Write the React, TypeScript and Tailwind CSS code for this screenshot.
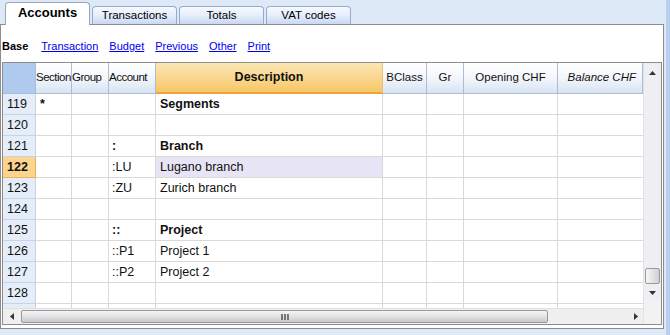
import React from "react";

type Row = {
  n: string;
  section?: string;
  account?: string;
  accBold?: boolean;
  desc?: string;
  descBold?: boolean;
  sel?: boolean;
};

const rows: Row[] = [
  { n: "119", section: "*", desc: "Segments", descBold: true },
  { n: "120" },
  { n: "121", account: ":", accBold: true, desc: "Branch", descBold: true },
  { n: "122", account: ":LU", desc: "Lugano branch", sel: true },
  { n: "123", account: ":ZU", desc: "Zurich branch" },
  { n: "124" },
  { n: "125", account: "::", accBold: true, desc: "Project", descBold: true },
  { n: "126", account: "::P1", desc: "Project 1" },
  { n: "127", account: "::P2", desc: "Project 2" },
  { n: "128" },
  { n: "" },
];

const font = { fontFamily: '"Liberation Sans", Arial, sans-serif' };

function Tab({ label, active }: { label: string; active?: boolean }) {
  if (active) {
    return (
      <div className="relative z-10 -mb-px flex h-[23px] w-[85px] items-center justify-center rounded-t-[4px] border border-b-0 border-[#9aa6b6] bg-white pb-[2px] text-[13px] font-bold text-black">
        {label}
      </div>
    );
  }
  return (
    <div className="flex h-[18px] w-[85px] items-center justify-center rounded-t-[4px] border border-b-0 border-[#93acd0] bg-gradient-to-b from-[#f7f9fe] via-[#e6edfb] to-[#c8d8f4] text-[11.5px] text-black">
      {label}
    </div>
  );
}

function HeaderCell({
  w,
  children,
  align = "center",
  italic,
  tight,
}: {
  w: string;
  children?: React.ReactNode;
  align?: "center" | "left" | "right";
  italic?: boolean;
  tight?: boolean;
}) {
  const al = align === "center" ? "justify-center" : align === "right" ? "justify-end pr-[6px]" : "justify-start";
  return (
    <div
      className={`${w} flex h-full shrink-0 items-center overflow-hidden whitespace-nowrap border-r border-b border-[#a9bdd6] bg-gradient-to-b from-[#ffffff] via-[#f3f6fb] to-[#d8e3f2] text-[11.5px] text-[#111] ${al} ${italic ? "italic" : ""} ${tight ? "tracking-[-0.5px]" : ""}`}
    >
      {children}
    </div>
  );
}

function UpArrow() {
  return (
    <svg width="7" height="4" viewBox="0 0 7 4">
      <path d="M0 4 L3.5 0 L7 4 Z" fill="#333" />
    </svg>
  );
}
function DownArrow() {
  return (
    <svg width="7" height="4" viewBox="0 0 7 4">
      <path d="M0 0 L3.5 4 L7 0 Z" fill="#333" />
    </svg>
  );
}
function LeftArrow() {
  return (
    <svg width="4" height="7" viewBox="0 0 4 7">
      <path d="M4 0 L0 3.5 L4 7 Z" fill="#333" />
    </svg>
  );
}
function RightArrow() {
  return (
    <svg width="4" height="7" viewBox="0 0 4 7">
      <path d="M0 0 L4 3.5 L0 7 Z" fill="#333" />
    </svg>
  );
}

export default function App() {
  return (
    <div className="flex h-[335px] w-[670px] overflow-hidden bg-[#dde9f6]" style={font}>
      <div className="flex w-[664px] flex-col">
        {/* tab strip */}
        <div className="flex h-[24px] items-end gap-[2px] pl-[5px]">
          <Tab label="Accounts" active />
          <Tab label="Transactions" />
          <Tab label="Totals" />
          <Tab label="VAT codes" />
        </div>
        {/* panel */}
        <div className="flex h-[305px] flex-col border border-[#8d8d8d] bg-white">
          {/* toolbar */}
          <div className="flex h-[37px] items-start gap-[11px] pl-[1px] pt-[15px] text-[11px] leading-[13px]">
            <span className="mr-[2px] font-bold text-black">Base</span>
            <span className="text-[#0000ee] underline">Transaction</span>
            <span className="text-[#0000ee] underline">Budget</span>
            <span className="text-[#0000ee] underline">Previous</span>
            <span className="text-[#0000ee] underline">Other</span>
            <span className="text-[#0000ee] underline">Print</span>
          </div>
          {/* grid */}
          <div className="mx-px flex h-[263px] border border-[#8d8d8d]">
            <div className="flex w-[640px] flex-col">
              {/* header */}
              <div className="flex h-[31px] shrink-0">
                <div className="h-full w-[33px] shrink-0 border-r border-b border-[#a9bdd6] bg-[#afcaee]" />
                <HeaderCell w="w-[36px]" align="left" tight>Section</HeaderCell>
                <HeaderCell w="w-[37px]" align="left" tight>Group</HeaderCell>
                <HeaderCell w="w-[47px]" align="left" tight>Account</HeaderCell>
                <div className="flex h-full w-[227px] shrink-0 items-center justify-center border-r border-b-2 border-r-[#e8c080] border-b-[#f0a33a] bg-gradient-to-b from-[#fbe6b4] to-[#f7c766] text-[12.5px] font-bold text-[#111]">
                  Description
                </div>
                <HeaderCell w="w-[44px]">BClass</HeaderCell>
                <HeaderCell w="w-[37px]">Gr</HeaderCell>
                <HeaderCell w="w-[94px]">Opening CHF</HeaderCell>
                <HeaderCell w="w-[85px]" align="right" italic>
                  Balance CHF
                </HeaderCell>
              </div>
              {/* body */}
              <div className="h-[214px] overflow-hidden">
                {rows.map((r, i) => (
                  <div key={i} className="flex h-[21px] shrink-0 text-[12.5px] text-[#111]">
                    <div
                      className={`flex h-full w-[33px] shrink-0 items-center border-r border-b pl-[4px] ${
                        r.sel
                          ? "border-[#e8b460] bg-[#fcd48c] font-bold"
                          : "border-[#c5d5e9] bg-[#e4edf8]"
                      }`}
                    >
                      {r.n}
                    </div>
                    <div className="flex h-full w-[36px] shrink-0 items-center border-r border-b border-[#d9d9d9] pl-[4px] font-bold">
                      {r.section}
                    </div>
                    <div className="h-full w-[37px] shrink-0 border-r border-b border-[#d9d9d9]" />
                    <div
                      className={`flex h-full w-[47px] shrink-0 items-center border-r border-b border-[#d9d9d9] pl-[3px] ${
                        r.accBold ? "font-bold" : ""
                      }`}
                    >
                      {r.account}
                    </div>
                    <div
                      className={`flex h-full w-[227px] shrink-0 items-center border-r border-b border-[#d9d9d9] pl-[4px] ${
                        r.descBold ? "font-bold" : ""
                      } ${r.sel ? "bg-[#e7e5f5]" : ""}`}
                    >
                      {r.desc}
                    </div>
                    <div className="h-full w-[44px] shrink-0 border-r border-b border-[#d9d9d9]" />
                    <div className="h-full w-[37px] shrink-0 border-r border-b border-[#d9d9d9]" />
                    <div className="h-full w-[94px] shrink-0 border-r border-b border-[#d9d9d9]" />
                    <div className="h-full w-[85px] shrink-0 border-b border-[#d9d9d9]" />
                  </div>
                ))}
              </div>
              {/* horizontal scrollbar */}
              <div className="flex h-[16px] shrink-0 items-center border-t border-[#e2e2e2] bg-[#efeff1]">
                <div className="flex w-[18px] justify-center">
                  <LeftArrow />
                </div>
                <div className="flex h-[13px] w-[527px] items-center justify-center rounded-[2px] border border-[#9a9a9a] bg-gradient-to-b from-[#f4f4f4] via-[#e2e2e4] to-[#c9c9cc]">
                  <div className="flex gap-[1px]">
                    <div className="h-[6px] w-[2px] bg-[#777]" />
                    <div className="h-[6px] w-[2px] bg-[#777]" />
                    <div className="h-[6px] w-[2px] bg-[#777]" />
                  </div>
                </div>
                <div className="flex-1" />
                <div className="flex w-[14px] justify-center">
                  <RightArrow />
                </div>
              </div>
            </div>
            {/* vertical scrollbar */}
            <div className="flex w-[18px] flex-col border-l border-[#e2e2e2] bg-[#efeef2]">
              <div className="flex h-[16px] items-center justify-center pt-[4px]">
                <UpArrow />
              </div>
              <div className="h-[189px]" />
              <div className="mx-[1px] h-[16px] rounded-[2px] border border-[#9a9a9a] bg-gradient-to-r from-[#f6f6f6] via-[#e4e4e6] to-[#cfcfd2]" />
              <div className="flex h-[16px] items-center justify-center pt-[2px]">
                <DownArrow />
              </div>
              <div className="flex-1 bg-[#f2f2f2]" />
            </div>
          </div>
        </div>
      </div>
      <div className="w-[2px]" />
      <div className="w-[4px] bg-[#b7cfee]" />
    </div>
  );
}
